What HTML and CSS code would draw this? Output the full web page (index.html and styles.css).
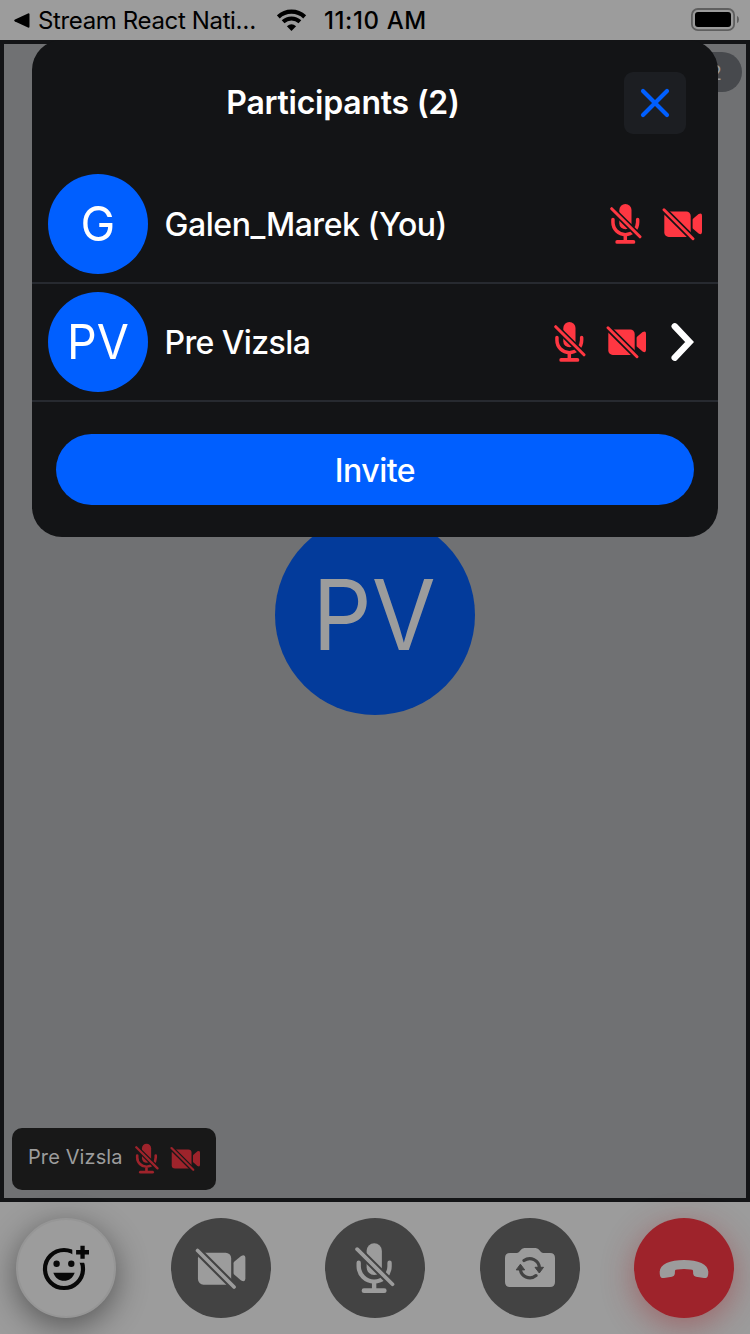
FILE: index.html
```html
<!DOCTYPE html>
<html lang="en">
<head>
<meta charset="utf-8">
<title>Participants</title>
<link rel="stylesheet" href="styles.css">
</head>
<body>
<svg class="defs" width="0" height="0" aria-hidden="true">
  <mask id="mic-cut" maskUnits="userSpaceOnUse" x="0" y="0" width="32" height="42">
    <rect width="32" height="42" fill="#fff"/>
    <path d="M0 4.1L31.5 35.3" stroke="#000" stroke-width="6.2"/>
  </mask>
  <mask id="cam-cut" maskUnits="userSpaceOnUse" x="0" y="0" width="41" height="34">
    <rect width="41" height="34" fill="#fff"/>
    <path d="M-1 -.2L34 34.8" stroke="#000" stroke-width="6.2"/>
  </mask>
  <symbol id="mic-off" viewBox="0 0 32 42">
    <g mask="url(#mic-cut)">
      <rect x="9.3" y="1" width="12.2" height="25.3" rx="6.1" fill="currentColor"/>
      <path d="M2.95 16.6V19.3A12.35 12.35 0 0 0 27.65 19.3V16.6M15.3 32V38" fill="none" stroke="currentColor" stroke-width="3.5" stroke-linecap="round"/>
    </g>
    <path d="M7.2 38.9H23.4" stroke="currentColor" stroke-width="3.8" stroke-linecap="round"/>
    <path d="M1.7 5.7L30 33.8" stroke="currentColor" stroke-width="3" stroke-linecap="round"/>
  </symbol>
  <symbol id="cam-off" viewBox="0 0 41 34">
    <g mask="url(#cam-cut)" fill="currentColor">
      <rect x="2.3" y="4.5" width="26.4" height="25.4" rx="4.4"/>
      <path d="M30.6 13Q30.6 12.2 31.3 11.6L36.6 7.1Q40 5.4 40 8.6V25.1Q40 28.3 36.6 26.6L31.3 22.1Q30.6 21.5 30.6 20.7Z"/>
    </g>
    <path d="M2 2.8L31 31.8" stroke="currentColor" stroke-width="2.9" stroke-linecap="round"/>
  </symbol>
</svg>

<div class="screen">
  <header class="status">
    <svg class="back" width="16" height="16" viewBox="0 0 16 16"><path d="M1 6.5L14 .4Q15.5 0 15.5 1.5V13.5Q15.5 15 14 14.6L1 8.5Q-.6 7.5 1 6.5Z"/></svg>
    <span class="app">Stream React Nati…</span>
    <svg class="wifi" width="30" height="24" viewBox="0 0 30 24" fill="none" stroke="#000">
      <path d="M1.3 8.9A19.3 19.3 0 0 1 27.7 8.9" stroke-width="4.2"/>
      <path d="M6.1 13.7A12.3 12.3 0 0 1 22.9 13.7" stroke-width="4"/>
      <path d="M14.5 22.9L9.9 18.3Q14.5 14.3 19.1 18.3Z" fill="#000" stroke="none"/>
    </svg>
    <span class="time">11:10 AM</span>
    <svg class="battery" width="50" height="24" viewBox="0 0 50 24">
      <rect x="1.9" y="1" width="42.2" height="21.2" rx="6" fill="none" stroke="#5f5f5f" stroke-width="1.8"/>
      <rect x="5" y="4" width="36" height="15" rx="3"/>
      <path d="M47 7.8Q49 9 49 11.5T47 15.2Z" fill="#5f5f5f"/>
    </svg>
  </header>

  <main class="video">
    <div class="count">2</div>
    <div class="avatar avatar-large"><span>PV</span></div>
    <div class="label">
      <span>Pre Vizsla</span>
      <svg class="mic-s"><use href="#mic-off"/></svg>
      <svg class="cam-s"><use href="#cam-off"/></svg>
    </div>
  </main>

  <footer class="controls">
    <button class="ctl ctl-react" aria-label="React">
      <svg width="50" height="50" viewBox="0 0 50 50">
        <mask id="face-cut" maskUnits="userSpaceOnUse" x="0" y="0" width="50" height="50"><path d="M0 0H30.3V17.7H50V50H0Z" fill="#fff"/></mask>
        <circle cx="22" cy="24" r="19" fill="none" stroke="currentColor" stroke-width="4.2" mask="url(#face-cut)"/>
        <g fill="currentColor">
          <circle cx="14.6" cy="18.7" r="3.2"/><circle cx="29.3" cy="18.7" r="3.2"/>
          <path d="M11.300 27.7H32.7C30.8 33 26.800 35.8 22 35.8S13.200 33 11.300 27.7Z"/>
          <path d="M38.4 .8h4.3v4.3H47v4.3h-4.3v4.3h-4.3V9.4h-4.3V5.1h4.3Z"/>
        </g>
      </svg>
    </button>
    <button class="ctl" aria-label="Camera off"><svg class="cam-l"><use href="#cam-off"/></svg></button>
    <button class="ctl" aria-label="Muted"><svg class="mic-l"><use href="#mic-off"/></svg></button>
    <button class="ctl" aria-label="Flip camera">
      <svg width="50" height="40" viewBox="0 0 50 40">
        <path d="M5 5H11.5Q13 5 14 4L16.2 1.6Q17.5 0 19.5 0H30.5Q32.5 0 33.8 1.6L36 4Q37 5 38.5 5H45Q50 5 50 10V34Q50 39 45 39H5Q0 39 0 34V10Q0 5 5 5Z" fill="currentColor"/>
        <g class="flip">
          <path d="M19 12.6A9.6 9.6 0 0 1 34.4 20M15.3 20.6A9.6 9.6 0 0 0 31 27.6" fill="none" stroke="currentColor" stroke-width="3.2" stroke-linecap="round"/>
          <path d="M30 19.3H38.5L34.3 25ZM11.2 21.9H19.7L15.4 16.2Z" fill="currentColor" stroke="currentColor" stroke-linejoin="round"/>
        </g>
      </svg>
    </button>
    <button class="ctl ctl-end" aria-label="Hang up">
      <svg width="50" height="20" viewBox="0 0 50 20"><path d="M.7 13C.7 5 11 1 25 1S49.3 5 49.3 13C49.3 18 48 19.6 45 19L37 17.8Q34.4 17.3 34.2 15L34 11.5Q33.5 10 25 10T16 11.5L15.8 15Q15.6 17.3 13 17.8L5 19C2 19.6 .7 18 .7 13Z" fill="currentColor"/></svg>
    </button>
  </footer>

  <section class="modal">
    <div class="modal-head">
      <h1>Participants (2)</h1>
      <button class="close" aria-label="Close"><svg width="30" height="30" viewBox="0 0 30 30"><path d="M3 3L27 27M27 3L3 27" stroke="#005fff" stroke-width="4.2" stroke-linecap="round"/></svg></button>
    </div>
    <div class="row">
      <div class="avatar"><span>G</span></div>
      <span class="name name-self">Galen_Marek (You)</span>
      <svg class="mic-m"><use href="#mic-off"/></svg>
      <svg class="cam-m"><use href="#cam-off"/></svg>
    </div>
    <div class="row row-link">
      <div class="avatar"><span>PV</span></div>
      <span class="name">Pre Vizsla</span>
      <svg class="mic-m"><use href="#mic-off"/></svg>
      <svg class="cam-m"><use href="#cam-off"/></svg>
      <svg class="chevron" width="24" height="40" viewBox="0 0 24 40"><path d="M4.7 4.3L19.6 20L4.7 35.7" fill="none" stroke="#fff" stroke-width="6.4" stroke-linecap="round"/></svg>
    </div>
    <button class="invite">Invite</button>
  </section>
</div>
</body>
</html>
```

FILE: styles.css
```css
* { box-sizing: border-box; }
body { margin: 0; font-family: Inter, "Liberation Sans", sans-serif; }
button { border: 0; padding: 0; font: inherit; }
svg { display: block; flex: none; }
.defs { position: absolute; }

.screen {
  position: relative;
  display: flex;
  flex-direction: column;
  width: 750px;
  height: 1334px;
  overflow: hidden;
  background: #9c9c9c;
}

.status {
  display: flex;
  align-items: center;
  height: 40px;
  padding: 0 10px 0 14px;
  font-size: 24px;
  color: #000;
}
.back { margin-top: 1px; }
.app { width: 239px; padding-left: 8px; white-space: nowrap; letter-spacing: -0.36px; }
.wifi { margin-left: 8px; }
.time { margin-left: 17px; font-weight: 500; letter-spacing: 0.6px; }
.battery { margin-left: auto; }

.video {
  display: flex;
  flex-direction: column;
  height: 1162px;
  border: 4px solid #131416;
  padding: 8px 4px 8px 8px;
  background: #707173;
}
.count {
  align-self: flex-end;
  width: 80px;
  height: 40px;
  padding-right: 20px;
  border-radius: 20px;
  background: #47494d;
  color: #97989a;
  font-size: 20px;
  line-height: 42px;
  text-align: right;
}

.avatar {
  display: flex;
  align-items: center;
  justify-content: center;
  flex: none;
  width: 100px;
  height: 100px;
  padding: 0 1px 2px 0;
  border-radius: 50%;
  background: #005fff;
  color: #fff;
  font-size: 48px;
}
.avatar span { transform: scaleX(0.97); }
.avatar-large {
  align-self: center;
  width: 200px;
  height: 200px;
  margin: 423px 4px 0 0;
  background: #033b9b;
  color: #9c9c9c;
  font-size: 98px;
}
.avatar-large span { transform: scaleX(0.945); }

.label {
  display: flex;
  align-self: flex-start;
  width: 204px;
  height: 62px;
  margin-top: auto;
  padding-left: 16px;
  border-radius: 10px;
  background: #181818;
  color: #9e232b;
}
.label span {
  width: 107px;
  color: #9c9c9c;
  font-size: 20px;
  line-height: 58px;
  letter-spacing: 0.1px;
  white-space: nowrap;
}
.mic-s { width: 24px; height: 31.5px; margin-top: 15.3px; }
.cam-s { width: 30.75px; height: 25.5px; margin: 18.3px 0 0 11px; }

.controls {
  display: flex;
  justify-content: space-between;
  height: 132px;
  padding: 16px 16px 0;
}
.ctl {
  display: flex;
  align-items: center;
  justify-content: center;
  width: 100px;
  height: 100px;
  border-radius: 50%;
  background: #434343;
  color: #9c9c9c;
}
.ctl-react {
  border: 2px solid #969696;
  background: #9c9c9c;
  color: #080808;
  box-shadow: 0 8px 32px rgba(0, 0, 0, 0.45);
}
.ctl-react svg { margin: 4px 0 0 2px; }
.ctl-end { background: #9e232b; box-shadow: 0 8px 32px rgba(158, 35, 43, 0.45); }
.ctl-end svg { margin-top: 1px; }
.cam-l { width: 51.7px; height: 42.8px; margin-left: 1px; }
.mic-l { width: 40px; height: 52.5px; }
.flip { color: #434343; }

.modal {
  position: absolute;
  left: 32px;
  top: 40px;
  width: 686px;
  height: 497px;
  border-radius: 30px;
  background: #131416;
  color: #fff;
}
.modal-head {
  display: flex;
  align-items: center;
  height: 126px;
  padding: 32px 32px 32px 30px;
}
.modal-head h1 {
  flex: 1;
  margin: 0;
  padding-bottom: 1px;
  font-size: 32px;
  font-weight: 600;
  letter-spacing: -0.25px;
  text-align: center;
  white-space: nowrap;
}
.close {
  display: flex;
  align-items: center;
  justify-content: center;
  width: 62px;
  height: 62px;
  padding-bottom: 1px;
  border-radius: 9px;
  background: #1c1e22;
}
.row {
  display: flex;
  align-items: center;
  height: 118px;
  padding: 0 15px 0 16px;
  border-bottom: 2px solid #272a30;
  color: #ff3742;
}
.row-link { padding-right: 24px; }
.name {
  flex: 1;
  padding-left: 16.5px;
  color: #fff;
  font-size: 32px;
  font-weight: 500;
  letter-spacing: -0.6px;
  white-space: nowrap;
}
.name-self { letter-spacing: -0.45px; }
.mic-m { width: 32px; height: 42px; }
.cam-m { width: 41px; height: 34px; margin-left: 20px; }
.chevron { margin-left: 23px; }
.invite {
  display: block;
  width: 638px;
  height: 71px;
  margin: 32px 24px 0;
  padding-top: 1px;
  border-radius: 36px;
  background: #005fff;
  color: #fff;
  font-size: 32px;
  font-weight: 500;
  letter-spacing: -0.5px;
}
```
